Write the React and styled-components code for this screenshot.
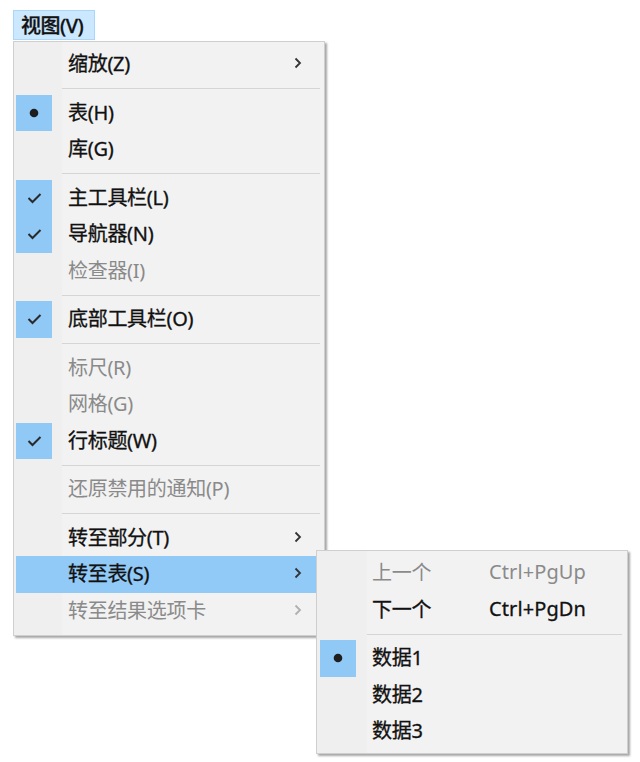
import React from 'react'
import styled, { createGlobalStyle } from 'styled-components'

const GlobalStyle = createGlobalStyle`
body {
  margin: 0;
  background: #fff;
  font-family: "Noto Sans", "Noto Sans CJK SC", sans-serif;
}
`

const Page = styled.div`
width: 640px;
height: 762px;
padding: 10px 0 0 13px;
box-sizing: border-box;
`

const MenuBar = styled.div`
display: flex;
`

const BarItem = styled.div`
height: 30px;
padding: 0 11px 2px 7px;
box-sizing: border-box;
display: flex;
align-items: center;
font-size: 20px;
font-weight: 500;
color: #111;
-webkit-text-stroke: 0.3px #111;
background: #cce8ff;
border: 1px solid #a9d7fb;
letter-spacing: -0.5px;
`

const Menu = styled.div`
width: ${props => props.width}px;
margin-top: 1px;
padding: ${props => props.pad};
box-sizing: border-box;
background: linear-gradient(to right, #efefef ${props => props.gutter}px, #f2f2f2 ${props => props.gutter}px);
border: 1px solid #cfcfcf;
box-shadow: 2px 2px 2px rgba(0, 0, 0, 0.35);
`

const SubMenu = styled(Menu)`
position: absolute;
top: -6px;
left: calc(100% - 6px);
margin-top: 0;
z-index: 2;
`

const Row = styled.div`
position: relative;
height: 36.5px;
display: grid;
grid-template-columns: 36px ${props => props.labelWidth || '1fr'} ${props => props.tail || '28px'};
column-gap: 16px;
align-items: center;
background: ${props => (props.active ? '#91c9f7' : 'transparent')};
color: ${props => (props.disabled ? '#8a8a8a' : '#111')};
-webkit-text-stroke: ${props => (props.disabled ? '0' : '0.3px #111')};
font-size: 20px;
white-space: nowrap;
`

const Mark = styled.div`
height: 100%;
display: flex;
align-items: center;
justify-content: center;
background: ${props => (props.on ? '#90c8f6' : 'transparent')};
`

const Label = styled.span`
letter-spacing: -0.3px;
padding-bottom: 3px;
`

const Shortcut = styled.span`
letter-spacing: 0.1px;
padding-bottom: 3px;
`

const Arrow = styled.div`
display: flex;
align-items: center;
justify-content: flex-start;
padding-bottom: 2px;
`

const Separator = styled.div`
height: 12px;
display: flex;
align-items: center;
padding-left: ${props => props.indent}px;
padding-right: 2px;

&::after {
  content: '';
  flex: 1;
  height: 1px;
  background: #d5d5d5;
}
`

const Check = () => (
  <svg width="15" height="12" viewBox="0 0 15 12">
    <polyline points="1.5,6 5.5,10 13.5,2" fill="none" stroke="#2a2a2a" strokeWidth="2" />
  </svg>
)

const Dot = () => (
  <svg width="10" height="10" viewBox="0 0 10 10">
    <circle cx="5" cy="5" r="4.3" fill="#1e1e1e" />
  </svg>
)

const Chevron = ({ dim }) => (
  <svg width="8" height="12" viewBox="0 0 8 12">
    <polyline points="1.5,1.5 6,6 1.5,10.5" fill="none" stroke={dim ? '#b0b0b0' : '#333'} strokeWidth="1.8" />
  </svg>
)

const Item = ({ label, mark, disabled, arrow, active, children }) => (
  <Row disabled={disabled} active={active}>
    <Mark on={!!mark}>
      {mark === 'check' && <Check />}
      {mark === 'dot' && <Dot />}
    </Mark>
    <Label>{label}</Label>
    <Arrow>{arrow && <Chevron dim={disabled} />}</Arrow>
    {children}
  </Row>
)

const SubItem = ({ label, keys, mark, disabled }) => (
  <Row disabled={disabled} labelWidth="101px" tail="auto">
    <Mark on={!!mark}>{mark === 'dot' && <Dot />}</Mark>
    <Label>{label}</Label>
    <Shortcut>{keys}</Shortcut>
  </Row>
)

const App = () => {
  return (
    <Page>
      <GlobalStyle />
      <MenuBar>
        <BarItem>视图(V)</BarItem>
      </MenuBar>
      <Menu width={312} pad="4px 2px 6px 2px" gutter={48}>
        <Item label="缩放(Z)" arrow />
        <Separator indent={46} />
        <Item label="表(H)" mark="dot" />
        <Item label="库(G)" />
        <Separator indent={46} />
        <Item label="主工具栏(L)" mark="check" />
        <Item label="导航器(N)" mark="check" />
        <Item label="检查器(I)" disabled />
        <Separator indent={46} />
        <Item label="底部工具栏(O)" mark="check" />
        <Separator indent={46} />
        <Item label="标尺(R)" disabled />
        <Item label="网格(G)" disabled />
        <Item label="行标题(W)" mark="check" />
        <Separator indent={46} />
        <Item label="还原禁用的通知(P)" disabled />
        <Separator indent={46} />
        <Item label="转至部分(T)" arrow />
        <Item label="转至表(S)" arrow active>
          <SubMenu width={312} pad="4px 3px 3px 3px" gutter={50}>
            <SubItem label="上一个" keys="Ctrl+PgUp" disabled />
            <SubItem label="下一个" keys="Ctrl+PgDn" />
            <Separator indent={47} />
            <SubItem label="数据1" mark="dot" />
            <SubItem label="数据2" />
            <SubItem label="数据3" />
          </SubMenu>
        </Item>
        <Item label="转至结果选项卡" arrow disabled />
      </Menu>
    </Page>
  )
}

export default App
